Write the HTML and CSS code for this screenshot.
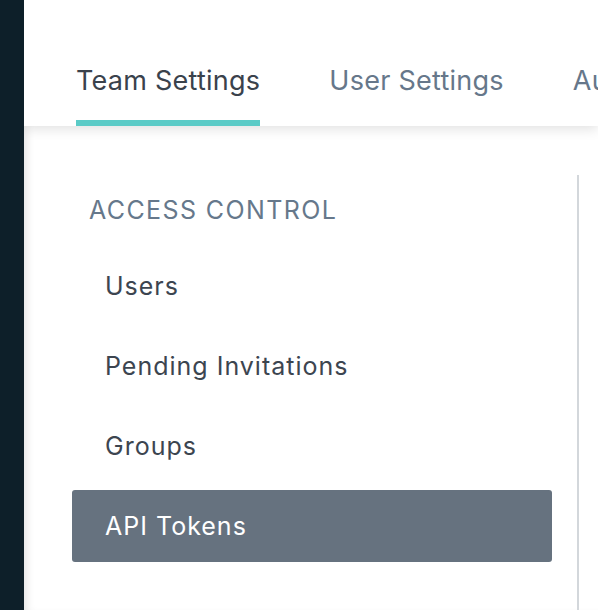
FILE: index.html
```html
<!DOCTYPE html>
<html>
<head>
<meta charset="utf-8">
<link rel="stylesheet" href="styles.css">
</head>
<body>
<div class="app">
  <aside class="rail"></aside>
  <main class="main">
    <header class="tabs">
      <a class="tab active">Team Settings</a>
      <a class="tab">User Settings</a>
      <a class="tab">Audit Log</a>
    </header>
    <div class="body">
      <nav class="menu">
        <div class="section">ACCESS CONTROL</div>
        <a class="item">Users</a>
        <a class="item">Pending Invitations</a>
        <a class="item">Groups</a>
        <a class="item selected">API Tokens</a>
      </nav>
      <div class="content"></div>
    </div>
  </main>
</div>
</body>
</html>
```
FILE: styles.css
```css
html, body {
  margin: 0;
  padding: 0;
  height: 100%;
  overflow: hidden;
  background: #fff;
  font-family: Inter, "Noto Sans", sans-serif;
}
.app {
  display: flex;
  height: 610px;
}
.rail {
  width: 24px;
  flex: none;
  background: #0d1f29;
}
.main {
  flex: 1;
  min-width: 0;
  position: relative;
  background: #fff;
  box-shadow: inset 8px 0 10px -6px rgba(0,0,0,0.12);
  overflow: hidden;
}
.tabs {
  position: relative;
  z-index: 1;
  height: 126px;
  display: flex;
  gap: 69px;
  padding-left: 52px;
  background: #fff;
  box-shadow: 0 3px 12px rgba(0,0,0,0.12);
  white-space: nowrap;
  overflow: hidden;
}
.tab {
  flex: none;
  display: flex;
  align-items: flex-end;
  padding-bottom: 23px;
  font-size: 27px;
  letter-spacing: 0.25px;
  color: #66778a;
  box-sizing: border-box;
  height: 126px;
  border-bottom: 6px solid transparent;
}
.tab.active {
  color: #3a424c;
  border-bottom-color: #5bcbc7;
}
.body {
  display: flex;
}
.menu {
  width: 480px;
  padding: 60px 0 0 48px;
  display: flex;
  flex-direction: column;
}
.section {
  font-size: 25px;
  letter-spacing: 1.4px;
  color: #66788b;
  padding-left: 17px;
  height: 48px;
  line-height: 48px;
  margin-bottom: 16px;
  white-space: nowrap;
}
.item {
  display: block;
  height: 72px;
  line-height: 72px;
  margin-bottom: 8px;
  padding-left: 33px;
  font-size: 25px;
  letter-spacing: 1px;
  color: #3c4550;
  border-radius: 3px;
}
.item.selected {
  background: #66727f;
  color: #fff;
}
.content {
  margin-left: 25px;
  margin-top: 49px;
  width: 2px;
  height: 600px;
  background: #d3d7db;
}
```
